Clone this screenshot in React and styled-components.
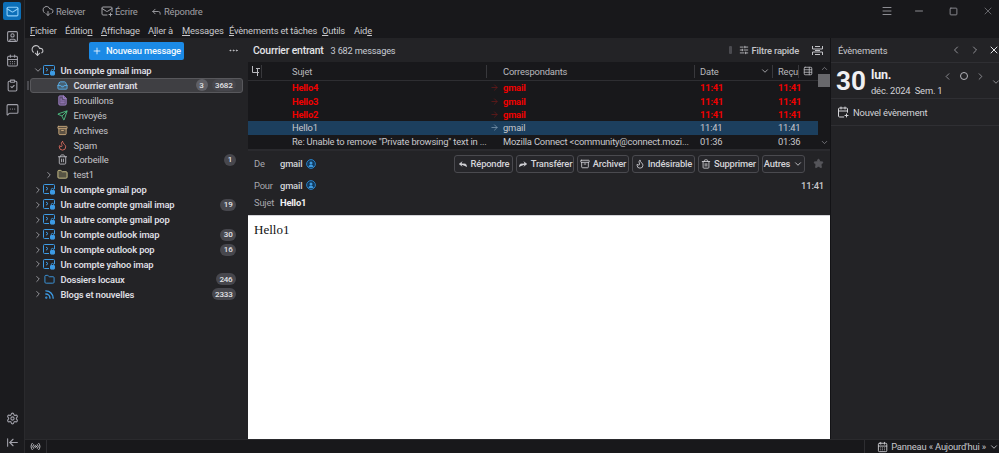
import styled, { createGlobalStyle } from 'styled-components';
import {
  Mail, SquareUser, CalendarDays, ClipboardCheck, MessageSquareMore, Settings, ArrowLeftToLine,
  CloudDownload, MailPlus, Reply, Forward, Menu as MenuIcon, Minus, Square, X, Plus, Ellipsis,
  ChevronDown, ChevronRight, ChevronLeft, ChevronUp, Inbox, FileText, Send, Archive, Flame, Trash2,
  Folder, Rss, SlidersHorizontal, Star, CalendarPlus, Radio, ArrowRight, TableProperties,
} from 'lucide-react';

const GlobalStyle = createGlobalStyle`
  html, body {
    margin: 0;
    height: 100%;
    background: #18181b;
    overflow: hidden;
  }
  #root {
    height: 100%;
  }
  * {
    box-sizing: border-box;
  }
`;

const Window = styled.div`
  width: 999px;
  height: 453px;
  display: flex;
  background: #18181b;
  color: #d4d4d8;
  font-family: Roboto, "Open Sans", sans-serif;
  font-size: 9.4px;
  letter-spacing: -0.18px;
  overflow: hidden;
`;

const Rail = styled.nav`
  width: 25px;
  flex: none;
  display: flex;
  flex-direction: column;
  align-items: center;
  padding-top: 2px;
  background: #1b1b1e;
  border-right: 1px solid #2a2a2d;
`;

const RailButton = styled.div`
  width: 18px;
  height: 18px;
  margin-bottom: ${p => p.$gap || 6.5}px;
  display: flex;
  align-items: center;
  justify-content: center;
  border-radius: 2px;
  background: ${p => (p.$active ? '#0c6fb8' : 'transparent')};
  color: ${p => (p.$active ? '#8fd0fa' : '#a1a1aa')};
`;

const RailSpacer = styled.div`
  flex: 1;
`;

const Main = styled.div`
  flex: 1;
  min-width: 0;
  display: flex;
  flex-direction: column;
`;

const TitleBar = styled.header`
  height: 22px;
  flex: none;
  display: flex;
  align-items: center;
  padding-left: 17px;
  color: #a1a1a6;
`;

const ToolAction = styled.div`
  display: flex;
  align-items: center;
  gap: 2px;
  width: ${p => p.$width}px;
`;

const WindowControls = styled.div`
  margin-left: auto;
  padding-right: 5px;
  display: flex;
  align-items: center;
  color: #8c8c92;
`;

const WindowControl = styled.div`
  width: 12px;
  margin-left: ${p => p.$gap}px;
  display: flex;
  justify-content: center;
  color: ${p => p.$color || 'inherit'};
`;

const MenuBar = styled.div`
  height: 16px;
  flex: none;
  display: flex;
  align-items: center;
  padding-left: 5px;
  color: #c8c8cc;
`;

const MenuItem = styled.span`
  width: ${p => p.$width}px;
  flex: none;
  white-space: nowrap;
  u {
    text-underline-offset: 1px;
  }
`;

const Workspace = styled.div`
  flex: 1;
  min-height: 0;
  display: flex;
`;

const FolderPane = styled.aside`
  width: 223px;
  flex: none;
  display: flex;
  flex-direction: column;
  background: #232326;
`;

const FolderToolbar = styled.div`
  height: 25px;
  flex: none;
  display: flex;
  align-items: center;
  padding: 0 9px 0 6px;
  color: #c4c4c8;
`;

const NewMessage = styled.button`
  width: 95px;
  height: 18px;
  margin-left: 45px;
  margin-right: auto;
  padding: 0;
  display: flex;
  align-items: center;
  justify-content: center;
  gap: 4px;
  border: 0;
  border-radius: 2px;
  background: #1b8ae6;
  color: #f4f9fe;
  font: inherit;
  font-weight: 500;
  letter-spacing: inherit;
  white-space: nowrap;
`;

const FolderRow = styled.div`
  height: 14.93px;
  position: relative;
  display: flex;
  align-items: center;
  margin: 0 5px;
  padding-right: 6px;
  padding-left: ${p => p.$indent}px;
  border: 1px solid ${p => (p.$selected ? '#58585c' : 'transparent')};
  border-radius: 3px;
  background: ${p => (p.$selected ? '#3f3f43' : 'transparent')};
  font-weight: ${p => (p.$strong ? 600 : 400)};
  color: ${p => (p.$strong ? '#dcdce0' : '#c6c6ca')};

  &::before {
    content: '';
    display: ${p => (p.$selected ? 'block' : 'none')};
    position: absolute;
    left: -4px;
    top: 2px;
    bottom: 2px;
    width: 2px;
    background: #4a4a4f;
  }
`;

const Twisty = styled.span`
  width: 11px;
  margin-right: ${p => p.$gap || 0}px;
  flex: none;
  display: flex;
  justify-content: center;
  color: #a8a8ae;
`;

const FolderIconSlot = styled.span`
  width: 12px;
  height: 12px;
  margin-right: 5.5px;
  flex: none;
  display: flex;
  align-items: center;
  justify-content: center;
  color: ${p => p.$color};
`;

const FolderName = styled.span`
  flex: 1;
  white-space: nowrap;
`;

const Badge = styled.span`
  height: 12px;
  min-width: 12px;
  margin-left: 4px;
  padding: 0 3.5px;
  display: inline-flex;
  align-items: center;
  justify-content: center;
  border-radius: 6px;
  background: ${p => (p.$light ? '#606066' : '#47474d')};
  color: #e4e4e7;
  font-size: 8px;
  font-weight: 500;
`;

const MailColumn = styled.section`
  width: 582px;
  flex: none;
  display: flex;
  flex-direction: column;
  background: #18181b;
`;

const ListHeader = styled.div`
  height: 24px;
  flex: none;
  display: flex;
  align-items: center;
  padding: 0 7px 0 5px;
  background: #232326;
`;

const ListTitle = styled.span`
  font-size: 10.4px;
  font-weight: 500;
  color: #e4e4e7;
`;

const ListCount = styled.span`
  margin-left: 7px;
  color: #c8ccd4;
  font-size: 9.2px;
`;

const FilterPill = styled.span`
  width: 3px;
  height: 8px;
  margin-left: auto;
  margin-right: 7px;
  border-radius: 1px;
  background: #4a4a4f;
`;

const QuickFilter = styled.div`
  display: flex;
  align-items: center;
  gap: 3px;
  font-weight: 500;
  color: #c4c4c8;
`;

const ListOptions = styled.svg`
  width: 11px;
  height: 11px;
  margin-left: 13px;
  fill: none;
  stroke: #c4c4c8;
  stroke-width: 1;
`;

const ThreadArea = styled.div`
  height: 89px;
  flex: none;
  display: flex;
  border-bottom: 2px solid #2a2a2e;
`;

const ThreadTable = styled.div`
  flex: 1;
  min-width: 0;
`;

const ColumnGrid = styled.div`
  display: grid;
  grid-template-columns: 44px 195px 208px 78px 26px 19px;
  align-items: center;
`;

const HeaderRow = styled(ColumnGrid)`
  height: 19px;
  border-bottom: 1px solid #2e2e32;
  color: #b8b8bd;
`;

const HeaderCell = styled.div`
  height: 13px;
  display: flex;
  align-items: center;
  padding-left: ${p => p.$pad ?? 5}px;
  border-right: ${p => (p.$divider ? '1px solid #38383c' : '0')};
`;

const ThreadColumnIcon = styled.span`
  width: 11px;
  height: 13px;
  display: flex;
  align-items: center;
  border-right: 1px solid #38383c;
`;

const SortChevron = styled.span`
  display: flex;
  margin-left: auto;
  margin-right: 2px;
`;

const ThreadRow = styled(ColumnGrid)`
  height: 13.4px;
  background: ${p => (p.$selected ? '#1c3f5e' : 'transparent')};
  color: ${p => (p.$unread ? '#f00000' : '#c8c8cc')};
  font-weight: ${p => (p.$unread ? 700 : 400)};
`;

const SubjectCell = styled.div`
  grid-column: 2;
  white-space: nowrap;
  overflow: hidden;
`;

const TimeCell = styled.div`
  white-space: nowrap;
  padding-left: 5px;
`;

const SenderCell = styled.div`
  display: flex;
  align-items: center;
  white-space: nowrap;
  overflow: hidden;
`;

const Arrow = styled.span`
  width: 16px;
  flex: none;
  display: flex;
  justify-content: flex-end;
  padding-right: 4px;
  color: ${p => (p.$unread ? '#6a1a1a' : '#7f99b0')};
`;

const ScrollBar = styled.div`
  width: 12px;
  flex: none;
  display: flex;
  flex-direction: column;
  align-items: center;
  justify-content: space-between;
  padding: 2px 0;
  color: #8a8a90;
`;

const ScrollThumb = styled.div`
  width: 12px;
  height: 13px;
  margin-top: 1px;
  margin-bottom: auto;
  background: #68686c;
`;

const MessageHeader = styled.div`
  height: 65px;
  flex: none;
  padding: 3px 6px 0 6px;
  background: #232326;
  border-bottom: 1px solid #d4d4d8;
`;

const HeaderLine = styled.div`
  height: ${p => p.$height}px;
  display: flex;
  align-items: center;
`;

const HeaderLabel = styled.span`
  width: 26px;
  flex: none;
  color: #a8a8ae;
`;

const HeaderValue = styled.span`
  font-weight: ${p => (p.$bold ? 700 : 500)};
  color: ${p => (p.$bold ? '#f0f0f2' : '#d4d4d8')};
`;

const ContactDot = styled.svg`
  width: 10px;
  height: 10px;
  margin-left: 4px;
  flex: none;
`;

const MessageActions = styled.div`
  margin-left: auto;
  display: flex;
  align-items: center;
  gap: 3px;
`;

const ActionButton = styled.button`
  width: ${p => p.$width}px;
  height: 18px;
  padding: 0;
  display: flex;
  align-items: center;
  justify-content: center;
  gap: 3px;
  border: 1px solid #4a4a4f;
  border-radius: 3px;
  background: #26262a;
  color: #d4d4d8;
  font: inherit;
  font-weight: 500;
  letter-spacing: inherit;
`;

const StarSlot = styled.span`
  display: flex;
  margin-left: 5px;
  color: #55555a;
`;

const HeaderTime = styled.span`
  margin-left: auto;
  font-weight: 500;
  color: #c8c8cc;
`;

const MessageBody = styled.div`
  flex: 1;
  padding: 6px 6px;
  background: #ffffff;
  color: #111111;
  font-family: "Liberation Serif", serif;
  font-size: 13px;
  letter-spacing: 0;
`;

const TodayPane = styled.aside`
  flex: 1;
  min-width: 0;
  display: flex;
  flex-direction: column;
  background: #232326;
  border-left: 1px solid #131316;
`;

const TodayHeader = styled.div`
  height: 25px;
  flex: none;
  display: flex;
  align-items: center;
  padding: 0 0 0 7px;
  border-bottom: 1px solid #2f2f33;
  color: #c8c8cc;
`;

const TodayNav = styled.div`
  margin-left: auto;
  display: flex;
  align-items: center;
  gap: 7px;
  margin-right: -1px;
  color: #b4b4ba;
`;

const DateRow = styled.div`
  height: 36px;
  flex: none;
  display: flex;
  align-items: center;
  padding-left: 5px;
  border-bottom: 1px solid #2f2f33;
`;

const DayNumber = styled.div`
  width: 35px;
  flex: none;
  font-size: 26px;
  font-weight: 700;
  color: #f0f0f2;
  line-height: 1;
  letter-spacing: 0;
`;

const DateText = styled.div`
  width: 71px;
  flex: none;
  margin-top: 3px;
  display: flex;
  flex-direction: column;
  gap: 3px;
`;

const WeekDay = styled.span`
  font-size: 12.5px;
  line-height: 14px;
  font-weight: 700;
  color: #ececef;
`;

const MonthLine = styled.span`
  font-size: 9.4px;
  line-height: 11px;
  white-space: nowrap;
`;

const DayNav = styled.div`
  display: flex;
  align-items: center;
  gap: 5px;
  margin-top: -9px;
  color: #b4b4ba;
`;

const NavCircle = styled.span`
  width: 8px;
  height: 8px;
  margin: 0 2px;
  border: 1px solid #b4b4ba;
  border-radius: 50%;
`;

const CollapseDay = styled.span`
  display: flex;
  margin-left: 5px;
  margin-top: 3px;
  color: #a1a1a6;
`;

const NewEvent = styled.div`
  height: 27px;
  flex: none;
  display: flex;
  align-items: center;
  gap: 4px;
  padding-left: 6px;
  border-bottom: 1px solid #2f2f33;
  color: #d4d4d8;
`;

const StatusBar = styled.footer`
  height: 14px;
  flex: none;
  display: flex;
  align-items: center;
  background: #18181b;
  border-top: 1px solid #2a2a2d;
  color: #c8c8cc;
`;

const OnlineState = styled.div`
  width: 22px;
  height: 100%;
  display: flex;
  align-items: center;
  justify-content: center;
  border-right: 1px solid #2e2e32;
`;

const TodayToggle = styled.div`
  margin-left: auto;
  width: 135px;
  height: 100%;
  display: flex;
  align-items: center;
  gap: 3px;
  padding-left: 12px;
  border-left: 1px solid #2e2e32;
  white-space: nowrap;
`;

const ToggleChevron = styled.span`
  display: flex;
  margin-left: auto;
`;

const AccountIcon = () => (
  <svg width="12" height="11" viewBox="0 0 12 11" fill="none" stroke="#3d9be4" strokeWidth="1">
    <path d="M6 9.500H1.500a1 1 0 0 1-1-1v-7a1 1 0 0 1 1-1h9a1 1 0 0 1 1 1V5" />
    <path d="M3 3l2 1.600L3 6.200" />
    <rect x="7.500" y="6.500" width="4" height="3.600" rx=".5" fill="#3d9be4" />
    <path d="M8.300 6.500V5.600a1.200 1.200 0 0 1 2.400 0v.9" />
  </svg>
);

const Contact = () => (
  <ContactDot viewBox="0 0 10 10">
    <circle cx="5" cy="5" r="4.400" fill="#12395c" stroke="#2a7fc4" strokeWidth="1" />
    <circle cx="5" cy="4" r="1.500" fill="#3f9be0" />
    <path d="M2.400 8c.4-1.600 1.400-2.200 2.600-2.200S7.200 6.400 7.600 8z" fill="#3f9be0" />
  </ContactDot>
);

const ThreadToggleIcon = () => (
  <svg width="9" height="10" viewBox="0 0 9 10" fill="none" stroke="#b8b8bd" strokeWidth="1">
    <path d="M1.500 0v6.500H8M5 2.500h4M6.500 2.500V10" />
  </svg>
);

const subFolders = [
  { name: 'Courrier entrant', icon: Inbox, color: '#5aaee8', tint: 0.3, selected: true, unread: 3, total: 3682 },
  { name: 'Brouillons', icon: FileText, color: '#a586cf', tint: 0.45 },
  { name: 'Envoyés', icon: Send, color: '#4fbf83', tint: 0 },
  { name: 'Archives', icon: Archive, color: '#c9a97c', tint: 0.35 },
  { name: 'Spam', icon: Flame, color: '#d66a5e', tint: 0 },
  { name: 'Corbeille', icon: Trash2, color: '#b6b6bc', tint: 0, total: 1 },
  { name: 'test1', icon: Folder, color: '#d1c68c', tint: 0.3, twisty: true },
];

const accounts = [
  { name: 'Un compte gmail pop' },
  { name: 'Un autre compte gmail imap', total: 19 },
  { name: 'Un autre compte gmail pop' },
  { name: 'Un compte outlook imap', total: 30 },
  { name: 'Un compte outlook pop', total: 16 },
  { name: 'Un compte yahoo imap' },
  { name: 'Dossiers locaux', total: 246, icon: Folder },
  { name: 'Blogs et nouvelles', total: 2333, icon: Rss },
];

const threads = [
  { subject: 'Hello4', sender: 'gmail', date: '11:41', unread: true },
  { subject: 'Hello3', sender: 'gmail', date: '11:41', unread: true },
  { subject: 'Hello2', sender: 'gmail', date: '11:41', unread: true },
  { subject: 'Hello1', sender: 'gmail', date: '11:41', selected: true },
  { subject: 'Re: Unable to remove "Private browsing" text in ...', sender: 'Mozilla Connect <community@connect.mozi...', date: '01:36' },
];

const menus = [
  { before: '', key: 'F', after: 'ichier', width: 35 },
  { before: 'Éditio', key: 'n', after: '', width: 36 },
  { before: '', key: 'A', after: 'ffichage', width: 47 },
  { before: 'A', key: 'l', after: 'ler à', width: 34 },
  { before: '', key: 'M', after: 'essages', width: 47 },
  { before: '', key: 'É', after: 'vènements et tâches', width: 93 },
  { before: '', key: 'O', after: 'utils', width: 32 },
  { before: 'Aid', key: 'e', after: '', width: 30 },
];

const actions = [
  { label: 'Répondre', icon: Reply, width: 59, fill: true },
  { label: 'Transférer', icon: Forward, width: 58, fill: true },
  { label: 'Archiver', icon: Archive, width: 52 },
  { label: 'Indésirable', icon: Flame, width: 63 },
  { label: 'Supprimer', icon: Trash2, width: 61 },
];

export default function App() {
  return (
    <Window>
      <GlobalStyle />
      <Rail>
        <RailButton $active $gap={7}><Mail size={13} /></RailButton>
        <RailButton><SquareUser size={13} /></RailButton>
        <RailButton><CalendarDays size={13} /></RailButton>
        <RailButton><ClipboardCheck size={13} /></RailButton>
        <RailButton><MessageSquareMore size={13} /></RailButton>
        <RailSpacer />
        <RailButton $gap={6}><Settings size={13} /></RailButton>
        <RailButton $gap={2}><ArrowLeftToLine size={13} /></RailButton>
      </Rail>
      <Main>
        <TitleBar>
          <ToolAction $width={59}><CloudDownload size={12} /> Relever</ToolAction>
          <ToolAction $width={50}><MailPlus size={12} /> Écrire</ToolAction>
          <ToolAction $width={60}><Reply size={11} /> Répondre</ToolAction>
          <WindowControls>
            <WindowControl $gap={0}><MenuIcon size={12} /></WindowControl>
            <WindowControl $gap={20}><Minus size={12} /></WindowControl>
            <WindowControl $gap={22}><Square size={9} strokeWidth={2.5} /></WindowControl>
            <WindowControl $gap={23} $color="#66666b"><X size={12} /></WindowControl>
          </WindowControls>
        </TitleBar>
        <MenuBar>
          {menus.map(({ before, key, after, width }) => (
            <MenuItem key={key + after} $width={width}>{before}<u>{key}</u>{after}</MenuItem>
          ))}
        </MenuBar>
        <Workspace>
          <FolderPane>
            <FolderToolbar>
              <CloudDownload size={13} />
              <NewMessage><Plus size={10} /> Nouveau message</NewMessage>
              <Ellipsis size={11} />
            </FolderToolbar>
            <FolderRow $indent={1} $strong>
              <Twisty><ChevronDown size={10} /></Twisty>
              <FolderIconSlot $color="#3d9be4"><AccountIcon /></FolderIconSlot>
              <FolderName>Un compte gmail imap</FolderName>
            </FolderRow>
            {subFolders.map(({ name, icon: Icon, color, tint, selected, unread, total, twisty }) => (
              <FolderRow key={name} $indent={twisty ? 12 : 25} $selected={selected} $strong={selected}>
                {twisty ? <Twisty $gap={2}><ChevronRight size={10} /></Twisty> : null}
                <FolderIconSlot $color={color}><Icon size={11} fill={color} fillOpacity={tint} /></FolderIconSlot>
                <FolderName>{name}</FolderName>
                {unread ? <Badge $light>{unread}</Badge> : null}
                {total ? <Badge>{total}</Badge> : null}
              </FolderRow>
            ))}
            {accounts.map(({ name, total, icon: Icon }) => (
              <FolderRow key={name} $indent={1} $strong>
                <Twisty><ChevronRight size={10} /></Twisty>
                <FolderIconSlot $color="#3d9be4">
                  {Icon ? <Icon size={11} strokeWidth={Icon === Rss ? 3 : 2} /> : <AccountIcon />}
                </FolderIconSlot>
                <FolderName>{name}</FolderName>
                {total ? <Badge>{total}</Badge> : null}
              </FolderRow>
            ))}
          </FolderPane>
          <MailColumn>
            <ListHeader>
              <ListTitle>Courrier entrant</ListTitle>
              <ListCount>3 682 messages</ListCount>
              <FilterPill />
              <QuickFilter><SlidersHorizontal size={10} /> Filtre rapide</QuickFilter>
              <ListOptions viewBox="0 0 11 11">
                <path d="M.5 1v3h10V1M.5 10V7h10v3M3 5.500h5M3 1.500h5M3 9.500h5" />
              </ListOptions>
            </ListHeader>
            <ThreadArea>
              <ThreadTable>
                <HeaderRow>
                  <HeaderCell $pad={3}><ThreadColumnIcon><ThreadToggleIcon /></ThreadColumnIcon></HeaderCell>
                  <HeaderCell $pad={0} $divider>Sujet</HeaderCell>
                  <HeaderCell $pad={16} $divider>Correspondants</HeaderCell>
                  <HeaderCell $divider>Date<SortChevron><ChevronDown size={10} /></SortChevron></HeaderCell>
                  <HeaderCell $divider>Reçu</HeaderCell>
                  <HeaderCell $pad={4}><TableProperties size={10} /></HeaderCell>
                </HeaderRow>
                {threads.map(({ subject, sender, date, unread, selected }) => (
                  <ThreadRow key={subject} $unread={unread} $selected={selected}>
                    <SubjectCell>{subject}</SubjectCell>
                    <SenderCell>
                      <Arrow $unread={unread}>{subject.startsWith('Hello') ? <ArrowRight size={9} /> : null}</Arrow>
                      {sender}
                    </SenderCell>
                    <TimeCell>{date}</TimeCell>
                    <TimeCell>{date}</TimeCell>
                  </ThreadRow>
                ))}
              </ThreadTable>
              <ScrollBar>
                <ChevronUp size={9} />
                <ScrollThumb />
                <ChevronDown size={9} />
              </ScrollBar>
            </ThreadArea>
            <MessageHeader>
              <HeaderLine $height={19}>
                <HeaderLabel>De</HeaderLabel>
                <HeaderValue>gmail</HeaderValue>
                <Contact />
                <MessageActions>
                  {actions.map(({ label, icon: Icon, width, fill }) => (
                    <ActionButton key={label} $width={width}>
                      <Icon size={10} fill={fill ? 'currentColor' : 'none'} /> {label}
                    </ActionButton>
                  ))}
                  <ActionButton $width={43}>Autres <ChevronDown size={10} /></ActionButton>
                  <StarSlot><Star size={11} fill="currentColor" /></StarSlot>
                </MessageActions>
              </HeaderLine>
              <HeaderLine $height={24}>
                <HeaderLabel>Pour</HeaderLabel>
                <HeaderValue>gmail</HeaderValue>
                <Contact />
                <HeaderTime>11:41</HeaderTime>
              </HeaderLine>
              <HeaderLine $height={11}>
                <HeaderLabel>Sujet</HeaderLabel>
                <HeaderValue $bold>Hello1</HeaderValue>
              </HeaderLine>
            </MessageHeader>
            <MessageBody>Hello1</MessageBody>
          </MailColumn>
          <TodayPane>
            <TodayHeader>
              Évènements
              <TodayNav>
                <ChevronLeft size={12} strokeWidth={1.5} />
                <ChevronRight size={12} strokeWidth={1.5} />
                <X size={12} color="#e4e4e7" />
              </TodayNav>
            </TodayHeader>
            <DateRow>
              <DayNumber>30</DayNumber>
              <DateText>
                <WeekDay>lun.</WeekDay>
                <MonthLine>déc. 2024&nbsp; Sem. 1</MonthLine>
              </DateText>
              <DayNav>
                <ChevronLeft size={11} strokeWidth={1.5} />
                <NavCircle />
                <ChevronRight size={11} strokeWidth={1.5} />
              </DayNav>
              <CollapseDay><ChevronDown size={10} /></CollapseDay>
            </DateRow>
            <NewEvent><CalendarPlus size={12} /> Nouvel évènement</NewEvent>
          </TodayPane>
        </Workspace>
        <StatusBar>
          <OnlineState><Radio size={11} /></OnlineState>
          <TodayToggle>
            <CalendarDays size={12} /> Panneau « Aujourd'hui »
            <ToggleChevron><ChevronDown size={10} /></ToggleChevron>
          </TodayToggle>
        </StatusBar>
      </Main>
    </Window>
  );
}
